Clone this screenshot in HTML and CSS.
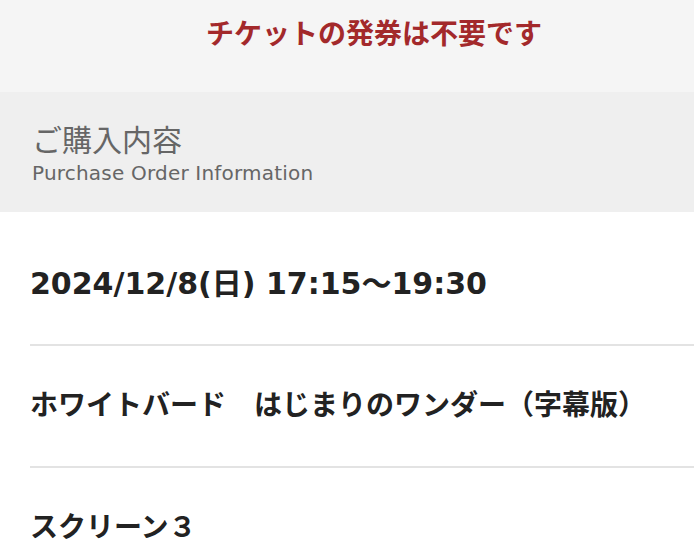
FILE: index.html
```html
<!DOCTYPE html>
<html lang="ja">
<head>
    <meta charset="UTF-8">
    <title>ご購入内容</title>
    <meta name="viewport" content="width=device-width, initial-scale=1.0">
    <link rel="stylesheet" href="styles.css">
</head>
<body>
    <div class="aviso">
        <p class="aviso-texto">チケットの発券は不要です</p>
    </div>

    <div class="seccion">
        <h2 class="seccion-titulo">ご購入内容</h2>
        <p class="seccion-sub">Purchase Order Information</p>
    </div>

    <ul class="detalle">
        <li class="detalle-fila fecha">2024/12/8(日) 17:15〜19:30</li>
        <li class="detalle-fila">ホワイトバード　はじまりのワンダー（字幕版）</li>
        <li class="detalle-fila">スクリーン３</li>
    </ul>
</body>
</html>
```

FILE: styles.css
```css
body {
    font-family: "DejaVu Sans", "Noto Sans CJK JP", sans-serif;
    background-color: #fff;
    margin: 0;
    color: #222;
}

.aviso {
    background-color: #f5f5f5;
    height: 92px;
    padding-left: 54px;
    text-align: center;
}

.aviso-texto {
    margin: 0;
    padding-top: 14px;
    font-family: "Noto Sans CJK JP", sans-serif;
    font-size: 28px;
    line-height: 36px;
    font-weight: bold;
    color: #a3292b;
}

.seccion {
    background-color: #efefef;
    height: 120px;
    padding: 27px 32px 0;
    box-sizing: border-box;
}

.seccion-titulo {
    margin: 0;
    font-family: "Noto Sans CJK JP", sans-serif;
    font-size: 30px;
    line-height: 38px;
    font-weight: normal;
    color: #666;
}

.seccion-sub {
    margin: 3px 0 0;
    font-size: 20px;
    line-height: 26px;
    letter-spacing: 0.2px;
    color: #666;
}

.detalle {
    list-style: none;
    margin: 0;
    padding: 12px 0 0 30px;
}

.detalle-fila {
    padding: 45px 0;
    height: 30px;
    line-height: 30px;
    font-size: 28px;
    font-weight: bold;
    border-bottom: 2px solid #e3e3e3;
}

.detalle-fila.fecha {
    font-size: 30px;
}

.detalle-fila:last-child {
    border-bottom: none;
}
```
